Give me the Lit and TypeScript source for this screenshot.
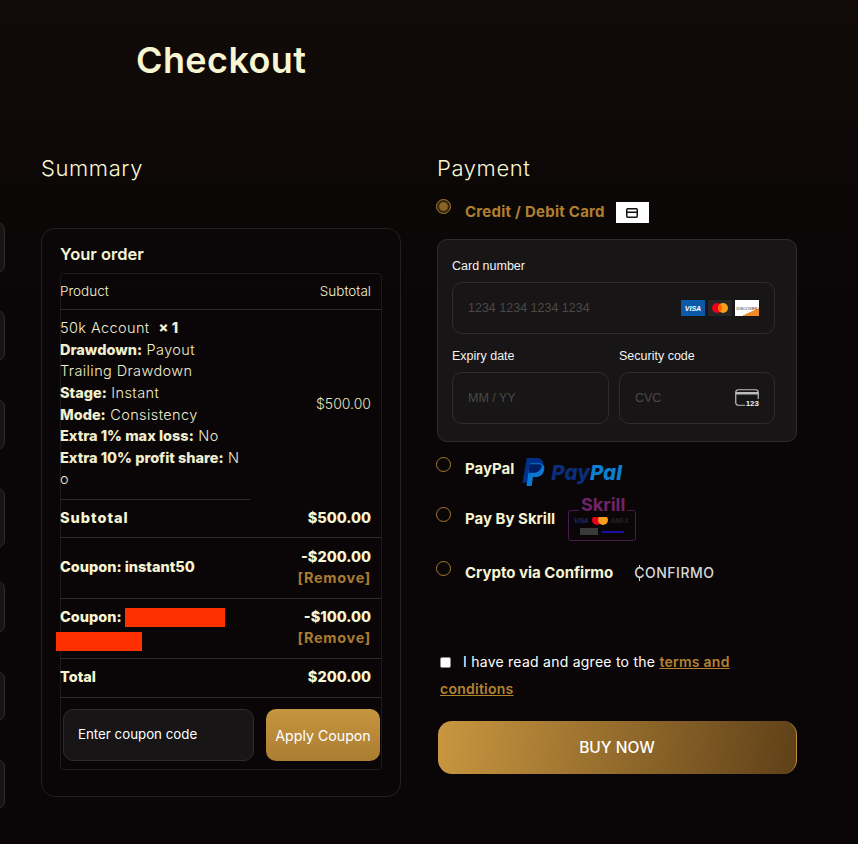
import { LitElement, css, html, svg } from 'lit';
import { customElement } from 'lit/decorators.js';

const RAIL_ITEMS = [
  { top: 12, height: 51 },
  { top: 37, height: 51 },
  { top: 38, height: 51 },
  { top: 38, height: 60 },
  { top: 33, height: 52 },
  { top: 38, height: 50 },
  { top: 38, height: 50 },
];

const PAYPAL_MARK = svg`<svg class="pp-mark" viewBox="0 0 24 28" width="25" height="29">
  <path fill="#003087" d="M5.500 0h9.200c4.600 0 7.300 2.500 6.600 6.900-.8 5.300-4.200 8-9 8H8.600L7.100 24H1.300z"/>
  <path fill="#0a78d2" d="M8.500 5h8.300c3.900 0 6.300 2.200 5.600 6-.8 4.900-3.900 7.300-8.300 7.300h-2.500L10.200 27H5.200l1.300-8.700z"/>
  <path fill="#001c64" d="M8.100 6h8.700c1.400 0 2.600.3 3.400.9-.9 4.900-4.200 7.400-8.900 7.400H8.700l-1.200.2z"/>
</svg>`;

@customElement('app-root')
export class AppRoot extends LitElement {
  static styles = css`
    :host {
      display: block;
      height: 844px;
      overflow: hidden;
      background: linear-gradient(#110a08, #0a0607 35%);
      color: #f6f4d2;
      font-family: Inter, 'Open Sans', sans-serif;
    }

    .page {
      display: flex;
      height: 844px;
    }

    .rail {
      flex: 0 0 6px;
      padding-top: 210px;
    }

    .rail-item {
      margin-left: -10px;
      width: 15px;
      box-sizing: border-box;
      background: #171414;
      border: 1px solid #2e2b2a;
      border-radius: 8px;
    }

    .main {
      flex: 1;
      padding-left: 35px;
    }

    h1 {
      margin: 0;
      padding: 38px 0 0 95px;
      font-size: 36px;
      line-height: 44px;
      font-weight: 600;
      letter-spacing: 0.4px;
      color: #f8f6d2;
    }

    .columns {
      display: flex;
      gap: 36px;
      margin-top: 73px;
    }

    .col {
      width: 360px;
      flex: none;
    }

    h2 {
      margin: 0;
      font-size: 22px;
      line-height: 26px;
      font-weight: 300;
      letter-spacing: 0.6px;
      color: #f8f6d2;
    }

    .order {
      box-sizing: border-box;
      height: 569px;
      margin-top: 47px;
      padding: 15px 18px 0;
      border: 1px solid #222020;
      border-radius: 14px;
    }

    .order h3 {
      margin: 0;
      font-size: 16.500px;
      line-height: 21px;
      font-weight: 600;
    }

    .table {
      margin-top: 8px;
      width: 322px;
      box-sizing: border-box;
      height: 497px;
      border: 1px solid #1c1a1a;
      border-radius: 4px;
      font-size: 14.500px;
    }

    .row {
      display: flex;
      justify-content: space-between;
      align-items: center;
      margin-left: -1px;
      padding-right: 10px;
      border-bottom: 1px solid #2e2b2a;
      box-sizing: border-box;
    }

    .row b {
      font-weight: 800;
    }

    .head {
      height: 36px;
      padding-bottom: 2px;
      font-size: 13.500px;
      font-weight: 300;
    }

    .product {
      height: 189px;
      padding-bottom: 2px;
      border-bottom: none;
      font-weight: 300;
      color: #f0eecf;
    }

    .lines {
      line-height: 21.570px;
      white-space: nowrap;
      letter-spacing: 0.4px;
    }

    .lines b {
      letter-spacing: 0;
    }

    .price {
      font-size: 14px;
      font-weight: 300;
      color: #e4e6c4;
    }

    .short-rule {
      width: 190px;
      height: 1px;
      margin-left: -1px;
      background: #2e2b2a;
    }

    .subtotal {
      height: 38px;
      padding-bottom: 2px;
    }

    .row .wide {
      letter-spacing: 1px;
    }

    .coupon {
      height: 61px;
      align-items: flex-start;
      padding-top: 10px;
      line-height: 20.500px;
    }

    .coupon.first {
      align-items: center;
      padding-top: 0;
      padding-bottom: 1px;
    }

    .coupon + .coupon {
      height: 60px;
      padding-top: 8px;
      padding-bottom: 0;
    }

    .total {
      height: 39px;
      padding-bottom: 3px;
    }

    .amounts {
      text-align: right;
    }

    .remove {
      color: #a97c2f;
      font-weight: 700;
      letter-spacing: 0.7px;
      display: block;
    }

    .redact {
      display: inline-block;
      vertical-align: top;
      height: 19px;
      background: #ff3000;
    }

    .redact.one {
      width: 100px;
      margin: 1px 0 0 3px;
    }

    .redact.two {
      width: 86px;
      margin-left: -4px;
      margin-top: 4px;
      display: block;
    }

    .coupon-form {
      display: flex;
      gap: 12px;
      padding: 11px 1px 0 2px;
    }

    .coupon-input {
      flex: 0 0 191px;
      height: 52px;
      box-sizing: border-box;
      display: flex;
      align-items: center;
      padding: 0 0 2px 14px;
      font-size: 13.300px;
      font-weight: 400;
      color: #fff;
      background: #171515;
      border: 1px solid #2e2b2a;
      border-radius: 10px;
    }

    .coupon-btn {
      flex: 0 0 114px;
      height: 52px;
      display: flex;
      align-items: center;
      justify-content: center;
      font-size: 14.200px;
      color: #fff;
      background: linear-gradient(180deg, #c6953f, #ab7d32);
      border-radius: 10px;
    }

    .radio-row {
      display: flex;
      align-items: flex-start;
    }

    .radio {
      flex: none;
      width: 15px;
      height: 15px;
      margin-left: -1px;
      box-sizing: border-box;
      border: 1.500px solid #a67a30;
      border-radius: 50%;
      background: #0a0607;
    }

    .radio.on {
      background: radial-gradient(circle, #8a6526 0 40%, #2a1e0c 58%, #3a2a10 70%);
    }

    .radio-label {
      margin: 2px 0 0 14px;
      font-size: 15px;
      line-height: 20px;
      font-weight: 700;
      white-space: nowrap;
    }

    .radio-label.gold {
      margin-top: 3px;
      letter-spacing: 0.25px;
      color: #b07f2e;
    }

    .method-first {
      margin-top: 18px;
      height: 40px;
    }

    .card-chip {
      display: flex;
      align-items: center;
      justify-content: center;
      width: 33px;
      height: 21px;
      margin: 3px 0 0 11px;
      background: #fff;
    }

    .card-box {
      box-sizing: border-box;
      height: 203px;
      padding: 18px 21px 0 14px;
      background: #171515;
      border: 1px solid #2f2d2b;
      border-radius: 10px;
      font-family: 'Liberation Sans', Arial, sans-serif;
      color: #f2f2f2;
    }

    .card-label {
      font-size: 12.500px;
      line-height: 16px;
    }

    .field {
      box-sizing: border-box;
      height: 52px;
      margin-top: 8px;
      padding: 0 15px 0 15px;
      display: flex;
      align-items: center;
      justify-content: space-between;
      border: 1px solid #2f2d2b;
      border-radius: 10px;
      font-size: 12.500px;
      color: #4b4947;
    }

    .card-split {
      display: grid;
      grid-template-columns: 157px 156px;
      gap: 10px;
      margin-top: 14px;
    }

    .brands {
      display: flex;
      gap: 3px;
    }

    .brand {
      width: 24px;
      height: 16px;
      display: flex;
      align-items: center;
      justify-content: center;
      overflow: hidden;
      font-family: 'Liberation Sans', sans-serif;
    }

    .visa {
      background: #0a5aa8;
      color: #fff;
      font-size: 7px;
      font-weight: 700;
      font-style: italic;
    }

    .mc {
      background: #252525;
    }

    .discover {
      background: linear-gradient(155deg, #fff 70%, #f08a24 71%);
      color: #222;
      font-size: 4px;
    }

    .cvc-icon {
      position: relative;
      width: 24px;
      height: 18px;
    }

    .cvc-digits {
      position: absolute;
      right: 0;
      bottom: -1px;
      padding-left: 1px;
      background: #171515;
      color: #eee;
      font-size: 8px;
      line-height: 9px;
      font-weight: 700;
    }

    .method {
      height: 50px;
    }

    .method.paypal {
      margin-top: 15px;
    }

    .method.skrill {
      height: 54px;
    }

    .method.crypto {
      height: 35px;
    }

    .pp-mark {
      margin: 1px 0 0 7px;
      flex: none;
    }

    .pp-word {
      margin: 3px 0 0 5px;
      font-size: 20.500px;
      line-height: 26px;
      font-weight: 800;
      font-style: italic;
      color: #0a2f7a;
    }

    .pp-word span {
      color: #0b7fd0;
    }

    .skrill-logo {
      position: relative;
      margin: 3px 0 0 13px;
      width: 68px;
      height: 31px;
      box-sizing: border-box;
      border: 1px solid #4a1c4e;
      border-radius: 3px;
    }

    .skrill-word {
      position: absolute;
      top: -18px;
      left: 10px;
      padding: 0 2px;
      background: #0a0607;
      font-size: 18px;
      line-height: 24px;
      font-weight: 700;
      color: #6e2468;
    }

    .skrill-top {
      display: flex;
      align-items: center;
      gap: 3px;
      padding: 4px 0 0 5px;
      font-size: 6px;
      font-weight: 700;
      font-style: italic;
      color: #1d2a6b;
    }

    .skrill-top i {
      color: #222;
    }

    .skrill-bottom {
      display: flex;
      align-items: center;
      gap: 4px;
      padding: 3px 0 0 11px;
    }

    .skrill-chip {
      width: 18px;
      height: 7px;
      background: #3a3a3a;
    }

    .skrill-blue {
      width: 22px;
      height: 2px;
      background: #1a10a8;
    }

    .confirmo {
      position: relative;
      margin: 2px 0 0 21px;
      font-size: 14px;
      line-height: 20px;
      letter-spacing: 0.5px;
      color: #d8d8d8;
      font-weight: 500;
    }

    .confirmo::before,
    .confirmo::after {
      content: '';
      position: absolute;
      left: 5px;
      width: 1px;
      height: 3px;
      background: #d8d8d8;
    }

    .confirmo::before {
      top: 2px;
    }

    .confirmo::after {
      bottom: 2px;
    }

    .terms {
      margin-top: 52px;
      padding-left: 3px;
      font-size: 14px;
      line-height: 27px;
      letter-spacing: 0.25px;
      color: #fff;
    }

    .tick {
      display: inline-block;
      vertical-align: -1px;
      width: 11px;
      height: 11px;
      margin-right: 12px;
      background: #fff;
      border-radius: 2px;
      border: 1px solid #8a8a8a;
      box-sizing: border-box;
    }

    .terms a {
      color: #b5832f;
      font-weight: 600;
      text-decoration: underline;
    }

    .buy {
      display: flex;
      align-items: center;
      justify-content: center;
      height: 53px;
      margin: 19px 0 0 1px;
      width: 359px;
      box-sizing: border-box;
      font-size: 15.500px;
      font-weight: 500;
      color: #fff;
      background: linear-gradient(98deg, #c99740, #5f4018);
      border-right: 1px solid #c2903c;
      border-radius: 14px;
    }
  `;

  private renderRail() {
    return html`<div class="rail">
      ${RAIL_ITEMS.map(
        (item) =>
          html`<div
            class="rail-item"
            style="margin-top:${item.top}px;height:${item.height}px"
          ></div>`,
      )}
    </div>`;
  }

  private renderOrder() {
    return html`<div class="order">
      <h3>Your order</h3>
      <div class="table">
        <div class="row head"><span>Product</span><span>Subtotal</span></div>
        <div class="row product">
          <div class="lines">
            50k Account &nbsp;<b>× 1</b><br />
            <b>Drawdown:</b> Payout<br />
            Trailing Drawdown<br />
            <b>Stage:</b> Instant<br />
            <b>Mode:</b> Consistency<br />
            <b>Extra 1% max loss:</b> No<br />
            <b>Extra 10% profit share:</b> N<br />
            o
          </div>
          <span class="price">$500.00</span>
        </div>
        <div class="short-rule"></div>
        <div class="row subtotal"><b class="wide">Subtotal</b><b>$500.00</b></div>
        <div class="row coupon first">
          <b>Coupon: instant50</b>
          <div class="amounts">
            <b>-$200.00</b><span class="remove">[Remove]</span>
          </div>
        </div>
        <div class="row coupon">
          <div>
            <b>Coupon:</b><span class="redact one"></span>
            <span class="redact two"></span>
          </div>
          <div class="amounts">
            <b>-$100.00</b><span class="remove">[Remove]</span>
          </div>
        </div>
        <div class="row total"><b>Total</b><b>$200.00</b></div>
        <div class="coupon-form">
          <div class="coupon-input">Enter coupon code</div>
          <div class="coupon-btn">Apply Coupon</div>
        </div>
      </div>
    </div>`;
  }

  private renderCardBox() {
    return html`<div class="card-box">
      <div class="card-label">Card number</div>
      <div class="field">
        <span>1234 1234 1234 1234</span>
        <div class="brands">
          <div class="brand visa">VISA</div>
          <div class="brand mc">
            <svg width="18" height="12" viewBox="0 0 18 12">
              <circle cx="6" cy="6" r="5" fill="#eb001b" />
              <circle cx="12" cy="6" r="5" fill="#f79e1b" />
              <path d="M9 2a5 5 0 0 1 0 8 5 5 0 0 1 0-8z" fill="#ff5f00" />
            </svg>
          </div>
          <div class="brand discover">DISCOVER</div>
        </div>
      </div>
      <div class="card-split">
        <div>
          <div class="card-label">Expiry date</div>
          <div class="field"><span>MM / YY</span></div>
        </div>
        <div>
          <div class="card-label">Security code</div>
          <div class="field">
            <span>CVC</span>
            <div class="cvc-icon">
              <svg width="24" height="17" viewBox="0 0 24 17" fill="none">
                <rect x="0.750" y="0.750" width="22.500" height="15.500" rx="2.500" stroke="#bdbdbd" stroke-width="1.200" />
                <rect x="1" y="3" width="22" height="2.500" fill="#bdbdbd" />
              </svg>
              <span class="cvc-digits">123</span>
            </div>
          </div>
        </div>
      </div>
    </div>`;
  }

  private renderPayment() {
    return html`
      <div class="radio-row method-first">
        <span class="radio on"></span>
        <span class="radio-label gold">Credit / Debit Card</span>
        <div class="card-chip">
          <svg width="12" height="10" viewBox="0 0 12 10" fill="none">
            <rect x="0.750" y="0.750" width="10.500" height="8.500" rx="1" stroke="#111" stroke-width="1.500" />
            <rect x="1" y="3.500" width="10" height="1.500" fill="#111" />
          </svg>
        </div>
      </div>
      ${this.renderCardBox()}
      <div class="radio-row method paypal">
        <span class="radio"></span>
        <span class="radio-label">PayPal</span>
        ${PAYPAL_MARK}
        <span class="pp-word">Pay<span>Pal</span></span>
      </div>
      <div class="radio-row method skrill">
        <span class="radio"></span>
        <span class="radio-label">Pay By Skrill</span>
        <div class="skrill-logo">
          <span class="skrill-word">Skrill</span>
          <div class="skrill-top">
            VISA
            <svg width="16" height="10" viewBox="0 0 16 10">
              <circle cx="5" cy="5" r="5" fill="#eb001b" />
              <circle cx="11" cy="5" r="5" fill="#f79e1b" />
            </svg>
            <i>AMEX</i>
          </div>
          <div class="skrill-bottom">
            <span class="skrill-chip"></span><span class="skrill-blue"></span>
          </div>
        </div>
      </div>
      <div class="radio-row method crypto">
        <span class="radio"></span>
        <span class="radio-label">Crypto via Confirmo</span>
        <span class="confirmo">CONFIRMO</span>
      </div>
      <div class="terms">
        <span class="tick"></span>I have read and agree to the
        <a>terms and</a> <a>conditions</a>
      </div>
      <div class="buy">BUY NOW</div>
    `;
  }

  render() {
    return html`<div class="page">
      ${this.renderRail()}
      <div class="main">
        <h1>Checkout</h1>
        <div class="columns">
          <div class="col">
            <h2>Summary</h2>
            ${this.renderOrder()}
          </div>
          <div class="col">
            <h2>Payment</h2>
            ${this.renderPayment()}
          </div>
        </div>
      </div>
    </div>`;
  }
}
